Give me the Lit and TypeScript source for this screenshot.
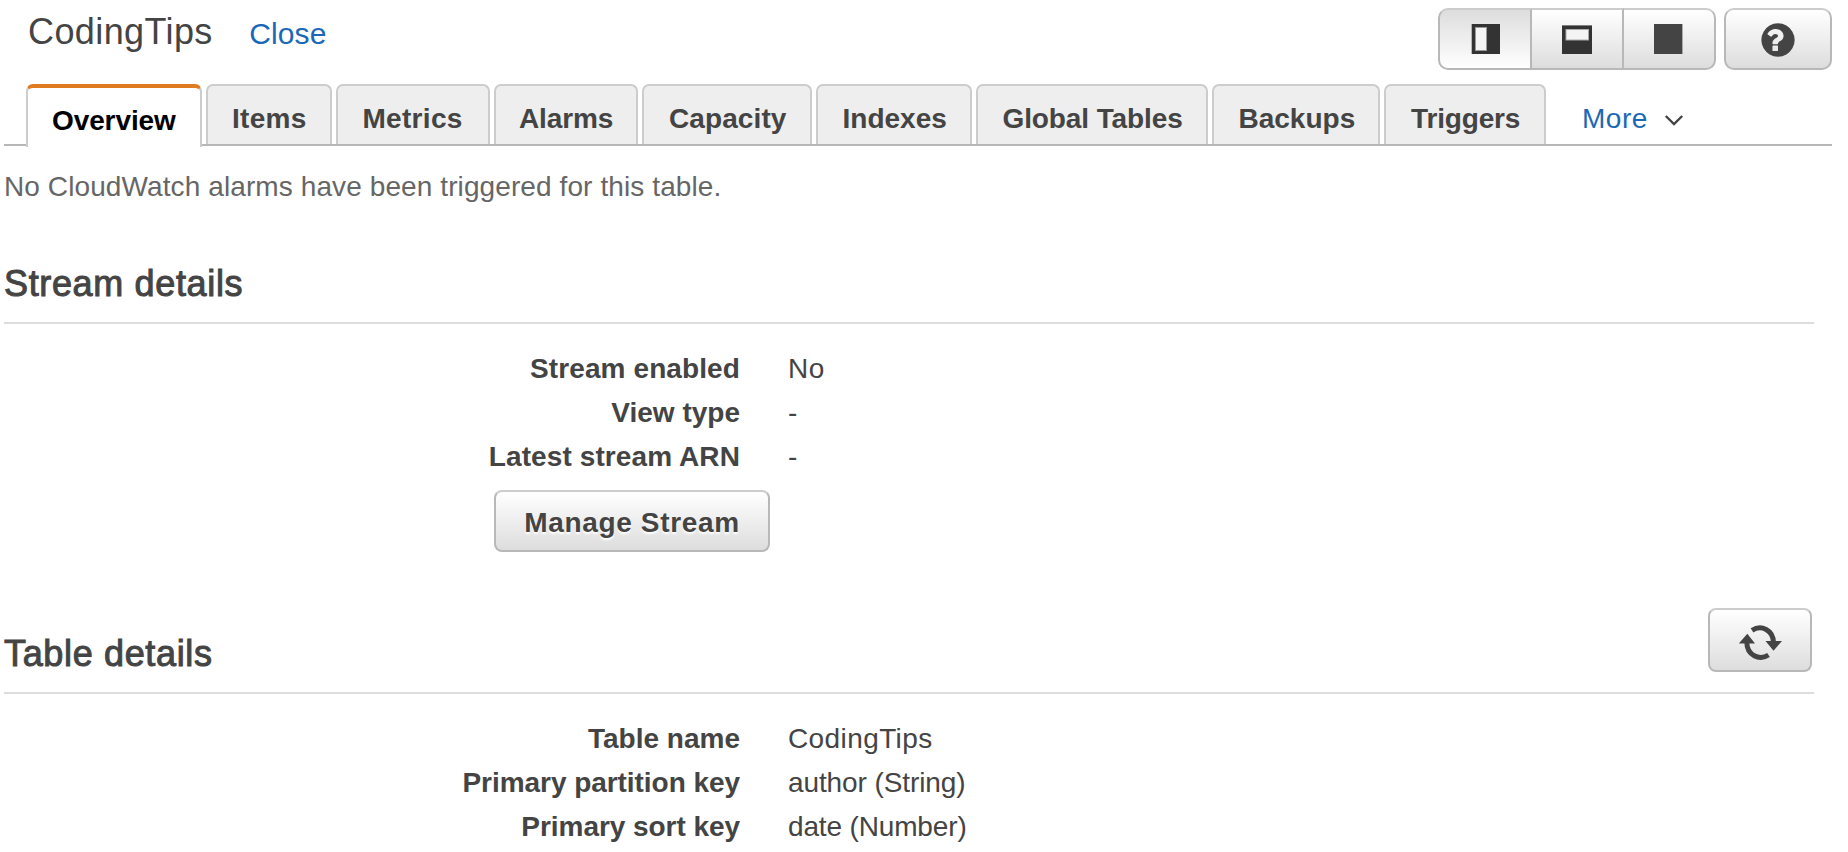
import { LitElement, html, css, svg } from "lit";
import { customElement, property } from "lit/decorators.js";
import { classMap } from "lit/directives/class-map.js";
import { styleMap } from "lit/directives/style-map.js";

interface Tab {
  label: string;
  width: number;
  spacing: number;
  inset?: number;
}

interface Row {
  label: string;
  value: string;
  labelSpacing?: number;
  valueSpacing?: number;
}

const TABS: Tab[] = [
  { label: "Overview", width: 176, spacing: -0.1 },
  { label: "Items", width: 126, spacing: 0.3 },
  { label: "Metrics", width: 154, spacing: 0.3, inset: 24.5 },
  { label: "Alarms", width: 144, spacing: -0.1, inset: 23 },
  { label: "Capacity", width: 170, spacing: 0.1, inset: 25 },
  { label: "Indexes", width: 156, spacing: 0, inset: 24.5 },
  { label: "Global Tables", width: 232, spacing: -0.1, inset: 24.5 },
  { label: "Backups", width: 168, spacing: 0, inset: 24.5 },
  { label: "Triggers", width: 162, spacing: -0.15, inset: 25 },
];

const STREAM_ROWS: Row[] = [
  { label: "Stream enabled", value: "No", labelSpacing: 0.1, valueSpacing: 0.6 },
  { label: "View type", value: "-" },
  { label: "Latest stream ARN", value: "-", labelSpacing: 0.1 },
];

const TABLE_ROWS: Row[] = [
  { label: "Table name", value: "CodingTips", valueSpacing: 0.4 },
  { label: "Primary partition key", value: "author (String)", labelSpacing: -0.05, valueSpacing: -0.1 },
  { label: "Primary sort key", value: "date (Number)", labelSpacing: -0.05, valueSpacing: -0.15 },
];

const px = (n = 0) => `${n}px`;

const splitVertical = svg`
  <rect x="1.7" y="0" width="28.3" height="30" fill="#333"/>
  <rect x="5.5" y="3.5" width="11" height="23" fill="#f4f4f4" stroke="#999" stroke-width="1"/>`;
const splitHorizontal = svg`
  <rect x="0" y="1.4" width="30" height="28.6" fill="#333"/>
  <rect x="4" y="5.5" width="22.5" height="10.5" fill="#f4f4f4" stroke="#aaa" stroke-width="1"/>`;
const fullPane = svg`<rect x="0" y="0" width="28.4" height="30" fill="#444"/>`;

@customElement("detail-section")
export class DetailSection extends LitElement {
  @property() heading = "";
  @property({ attribute: false }) rows: Row[] = [];

  static styles = css`
    :host { display: block; }
    .head {
      display: flex;
      justify-content: space-between;
      align-items: flex-start;
      height: 86px;
      box-sizing: border-box;
      border-bottom: 2px solid #ddd;
      width: 1810px;
    }
    h2 {
      margin: 24px 0 0;
      font-size: 36px;
      line-height: 44px;
      font-weight: 400;
      letter-spacing: 0.65px;
      -webkit-text-stroke: 1px #444;
    }
    .rows { padding-top: 23px; }
    .row {
      display: grid;
      grid-template-columns: 736px 1fr;
      column-gap: 48px;
      line-height: 44px;
    }
    .label { font-weight: 700; text-align: right; }
  `;

  render() {
    return html`
      <div class="head"><h2>${this.heading}</h2><slot name="action"></slot></div>
      <div class="rows">
        ${this.rows.map(
          (r) => html`<div class="row">
            <span class="label" style=${styleMap({ letterSpacing: px(r.labelSpacing) })}>${r.label}</span>
            <span style=${styleMap({ letterSpacing: px(r.valueSpacing) })}>${r.value}</span>
          </div>`
        )}
      </div>
      <slot></slot>
    `;
  }
}

@customElement("app-root")
export class AppRoot extends LitElement {
  static styles = css`
    :host {
      display: block;
      width: 1848px;
      height: 852px;
      overflow: hidden;
      background: #fff;
      color: #444;
      font: 28px/44px "Liberation Sans", Arial, sans-serif;
    }
    header {
      display: flex;
      justify-content: space-between;
      align-items: flex-start;
      height: 84px;
      padding: 8px 16px 0 28px;
      box-sizing: border-box;
    }
    .title { display: flex; align-items: baseline; gap: 36.5px; }
    h1 {
      margin: 0;
      font-size: 36px;
      line-height: 48px;
      font-weight: 400;
      letter-spacing: 0.4px;
    }
    .link { color: #1b69b6; }
    .close { font-size: 30px; line-height: 36px; letter-spacing: 0.1px; }
    .tools { display: flex; gap: 8px; }
    .group { display: flex; }
    button {
      display: flex;
      align-items: center;
      justify-content: center;
      box-sizing: border-box;
      margin: 0;
      padding: 0;
      height: 62px;
      border: 2px solid #b8b8b8;
      border-top-color: #ccc;
      border-radius: 10px;
      background: linear-gradient(#fff, #ddd);
      color: #444;
      font: inherit;
    }
    svg { display: block; }
    .group button { width: 94px; border-radius: 0; border-left-width: 0; }
    .group button:first-child { border-left-width: 2px; border-radius: 10px 0 0 10px; }
    .group button:nth-child(2) { width: 92px; }
    .group button:last-child { width: 92px; border-radius: 0 10px 10px 0; }
    .group button.pressed { background: linear-gradient(#ddd, #fff); }
    .help { width: 108px; }
    .help svg { margin-top: 2px; }
    nav {
      display: flex;
      gap: 4px;
      height: 62px;
      box-sizing: border-box;
      margin: 0 16px 0 4px;
      padding-left: 22px;
      border-bottom: 2px solid #b8b8b8;
    }
    .tab {
      box-sizing: border-box;
      height: 60px;
      padding: 5px 0 0 24px;
      border: 2px solid #ccc;
      border-bottom: 0;
      border-radius: 7px 7px 0 0;
      background: #eee;
      font-weight: 700;
      line-height: 55px;
      line-height: 56px;
      white-space: nowrap;
    }
    .tab.active {
      height: 63px;
      border-top: 4px solid #e07b20;
      background: #fff;
      color: #000;
    }
    .more {
      display: flex;
      gap: 16px;
      padding: 7px 0 0 32px;
      line-height: 56px;
      letter-spacing: 0.5px;
    }
    .more svg { margin-top: 23px; }
    .message { margin: 19px 0 0 4px; color: #666; letter-spacing: 0.1px; }
    .stream { margin: 29px 0 0 4px; }
    .table { margin: 56px 0 0 4px; }
    .manage {
      align-items: flex-start;
      width: 276px;
      margin: 11px 0 0 490px;
      padding-top: 2px;
      border-radius: 8px;
      font-weight: 700;
      line-height: 58px;
      letter-spacing: 0.67px;
      text-shadow: 0 2px 2px #fff;
    }
    .refresh {
      width: 104px;
      height: 64px;
      margin: 0 2px 0 0;
      border-radius: 8px;
    }
    .refresh svg { margin-top: 4px; }
  `;

  render() {
    return html`
      <header>
        <div class="title">
          <h1>CodingTips</h1>
          <a class="link close">Close</a>
        </div>
        <div class="tools">
          <div class="group">
            ${[splitVertical, splitHorizontal, fullPane].map(
              (icon, i) => html`<button class=${classMap({ pressed: i === 0 })}>
                <svg width="30" height="30" viewBox="0 0 30 30">${icon}</svg>
              </button>`
            )}
          </div>
          <button class="help">
            <svg width="34" height="34" viewBox="112 112 1568 1568">
              <path fill="#444" d="M896 1376v-192q0-14-9-23t-23-9h-192q-14 0-23 9t-9 23v192q0 14 9 23t23 9h192q14 0 23-9t9-23zM1152 704q0-88-55.5-163t-138.5-116-170-41q-243 0-371 213-15 24 8 42l132 100q7 6 19 6 16 0 25-12 53-68 86-92 34-24 86-24 48 0 85.5 26t37.5 59q0 38-20 61t-68 45q-63 28-115.5 86.5t-52.5 125.5v36q0 14 9 23t23 9h192q14 0 23-9t9-23q0-19 21.5-49.5t54.5-49.5q32-18 49-28.5t46-35 44.5-48 28-60.5 12.5-81zM1664 896q0 209-103 385.5t-279.5 279.5-385.5 103-385.5-103-279.5-279.5-103-385.5 103-385.5 279.5-279.5 385.5-103 385.5 103 279.5 279.5 103 385.5z"/>
            </svg>
          </button>
        </div>
      </header>

      <nav>
        ${TABS.map(
          (t, i) => html`<div
            class=${classMap({ tab: true, active: i === 0 })}
            style=${styleMap({
              width: px(t.width),
              letterSpacing: px(t.spacing),
              paddingLeft: px(t.inset ?? 24),
            })}
          >${t.label}</div>`
        )}
        <div class="more">
          <span class="link">More</span>
          <svg width="20" height="14" viewBox="0 0 20 14">
            <path d="M1.8 2 10 10 18.2 2" fill="none" stroke="#444" stroke-width="2.4"/>
          </svg>
        </div>
      </nav>

      <div class="message">No CloudWatch alarms have been triggered for this table.</div>

      <detail-section class="stream" heading="Stream details" .rows=${STREAM_ROWS}>
        <button class="manage">Manage Stream</button>
      </detail-section>

      <detail-section class="table" heading="Table details" .rows=${TABLE_ROWS}>
        <button class="refresh" slot="action">
          <svg width="44" height="36" viewBox="8 10 44 36">
            <g fill="none" stroke="#444" stroke-width="5">
              <path d="M22 16.3C31 10.500 43.500 15.500 43.500 29"/>
              <path d="M38.500 41C29.500 46.800 16.800 41.500 16.800 28"/>
            </g>
            <path fill="#444" d="M35.500 27h16.500L43.500 36.800zM8.800 29.500h16.200L17.300 19.800z"/>
          </svg>
        </button>
      </detail-section>
    `;
  }
}
